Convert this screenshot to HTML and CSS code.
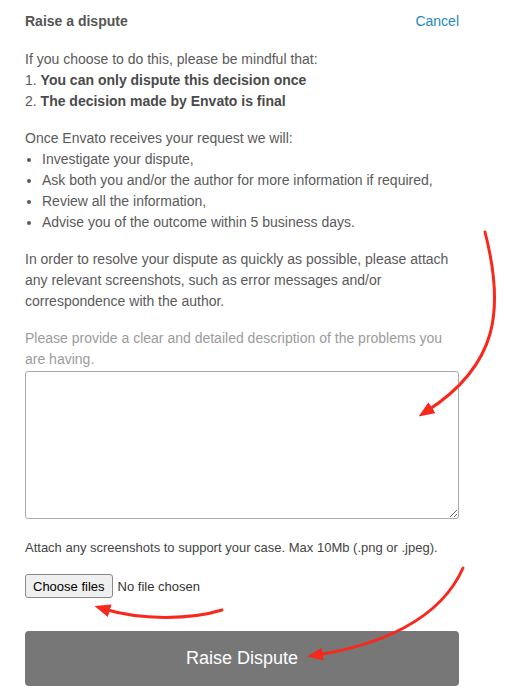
FILE: index.html
```html
<!DOCTYPE html>
<html lang="en">
<head>
  <meta charset="UTF-8">
  <meta name="viewport" content="width=device-width, initial-scale=1.0">
  <title>Raise a dispute</title>
  <link rel="stylesheet" href="styles.css">
</head>
<body>

<div class="dispute">
  <div class="dispute-head">
    <h3 class="dispute-title">Raise a dispute</h3>
    <a class="cancel" href="#">Cancel</a>
  </div>

  <p class="text">
    If you choose to do this, please be mindful that:<br>
    1. <strong>You can only dispute this decision once</strong><br>
    2. <strong>The decision made by Envato is final</strong>
  </p>

  <p class="text text-tight">Once Envato receives your request we will:</p>
  <ul class="steps">
    <li>Investigate your dispute,</li>
    <li>Ask both you and/or the author for more information if required,</li>
    <li>Review all the information,</li>
    <li>Advise you of the outcome within 5 business days.</li>
  </ul>

  <p class="text">In order to resolve your dispute as quickly as possible, please attach any relevant screenshots, such as error messages and/or correspondence with the author.</p>

  <label class="hint" for="description">Please provide a clear and detailed description of the problems you are having.</label>
  <textarea class="description" id="description"></textarea>

  <p class="attach">Attach any screenshots to support your case. Max 10Mb (.png or .jpeg).</p>
  <div class="files">
    <label class="file-btn">
      Choose files
      <input class="file-input" type="file" multiple accept=".png,.jpeg">
    </label>
    <span class="file-name">No file chosen</span>
  </div>

  <button class="submit" type="button">Raise Dispute</button>
</div>

<!-- red annotation arrows drawn over the form -->
<svg class="arrows" width="517" height="700" viewBox="0 0 517 700">
  <defs>
    <marker id="head" markerUnits="userSpaceOnUse" viewBox="0 0 16 13" markerWidth="16" markerHeight="13" refX="6" refY="6.5" orient="auto">
      <path d="M0 0 L16 6.5 L0 13 Z" fill="#f8291c"/>
    </marker>
  </defs>
  <path d="M485 232 C505 310 498 365 427 411" marker-end="url(#head)"/>
  <path d="M222 610 C190 620 140 620 104 609" marker-end="url(#head)"/>
  <path d="M463 568 C440 620 380 645 317 655" marker-end="url(#head)"/>
</svg>

</body>
</html>
```

FILE: styles.css
```css
body {
  margin: 0;
  background: #fff;
  font-family: "Liberation Sans", Arial, sans-serif;
  color: #5a5a5a;
}

.dispute {
  width: 434px;
  padding: 11px 0 0 25px;
  font-size: 14px;
  line-height: 21px;
}

.dispute-head {
  display: flex;
  justify-content: space-between;
  align-items: center;
  margin-bottom: 17px;
}

.dispute-title {
  margin: 0;
  font-size: 14px;
  font-weight: bold;
  color: #555;
}

.cancel {
  color: #1f88c0;
  text-decoration: none;
}

.text {
  margin: 0 0 16px;
}

.text strong {
  color: #4a4a4a;
}

.text-tight {
  margin-bottom: 0;
}

.steps {
  margin: 0 0 16px;
  padding-left: 17px;
}

.hint {
  display: block;
  color: #9b9b9b;
  margin-bottom: 1px;
}

.description {
  display: block;
  box-sizing: border-box;
  width: 100%;
  height: 148px;
  margin: 0;
  border: 1px solid #aaa;
  border-radius: 3px;
  font-family: inherit;
}

.attach {
  margin: 20px 0 0;
  font-size: 13px;
  line-height: 18px;
  color: #444;
}

.files {
  display: flex;
  align-items: center;
  gap: 5px;
  margin-top: 17px;
  font-size: 13px;
  color: #333;
}

.file-btn {
  display: flex;
  align-items: center;
  box-sizing: border-box;
  height: 24px;
  padding: 0 7px;
  border: 1px solid #8a8a8a;
  border-radius: 3px;
  background: #efefef;
  color: #000;
  cursor: pointer;
}

.file-input {
  display: none;
}

.submit {
  display: block;
  width: 100%;
  height: 55px;
  margin-top: 33px;
  border: none;
  border-radius: 4px;
  background: #777;
  color: #fff;
  font-family: inherit;
  font-size: 18px;
  cursor: pointer;
}

.arrows {
  position: absolute;
  top: 0;
  left: 0;
  pointer-events: none;
}

.arrows path {
  fill: none;
  stroke: #f8291c;
  stroke-width: 3;
  stroke-linecap: round;
}

.arrows marker path {
  stroke: none;
  fill: #f8291c;
}
```
